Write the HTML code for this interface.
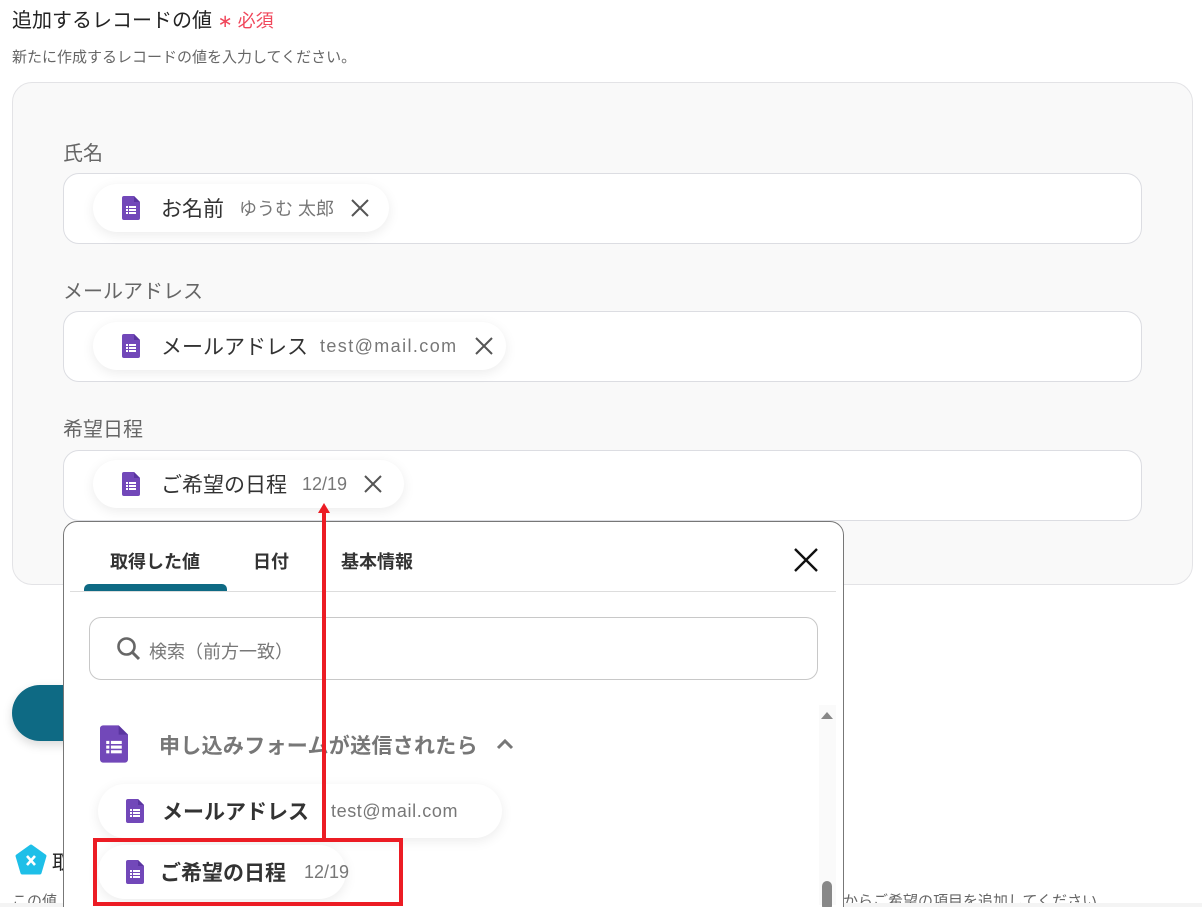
<!DOCTYPE html>
<html style="overflow:hidden;width:1202px;height:907px"><head><meta charset="utf-8">
<style>
*{margin:0;padding:0;box-sizing:border-box}
body{width:1202px;height:907px;overflow:hidden;background:#fff;position:relative;font-family:"Liberation Sans","Noto Sans CJK JP",sans-serif;color:#222}
.a{position:absolute}
svg{flex-shrink:0}
.panel{left:12px;top:82px;width:1181px;height:503px;background:#f9f9f9;border:1px solid #e3e3e6;border-radius:20px}
.lbl{font-size:20px;color:#666}
.inp{left:63px;width:1079px;height:71px;background:#fff;border:1px solid #dcdde2;border-radius:16px}
.pill{height:48px;background:#fff;border-radius:24px;box-shadow:0 3px 12px rgba(0,0,0,.08);display:flex;align-items:center;padding-left:29px;white-space:nowrap}
.pill .n{font-size:21px;color:#333;margin-left:21px}
.pill .v{font-size:18px;color:#777;margin-left:14px}
.pill .x{margin-left:16px}
.em{letter-spacing:1.4px}
</style></head><body>
<div class="a" style="left:12px;top:4px;font-size:20px;color:#222">追加するレコードの値 <span style="color:#f0475b;font-size:18px">∗ 必須</span></div>
<div class="a" style="left:12px;top:46px;font-size:15px;color:#666">新たに作成するレコードの値を入力してください。</div>
<div class="a panel"></div>
<div class="a lbl" style="left:63px;top:137px">氏名</div>
<div class="a inp" style="top:173px"></div>
<div class="a pill" style="left:93px;top:184px;width:296px">
<svg width="18" height="24" viewBox="0 0 18 24"><path d="M2 0h10l6 6v16a2 2 0 0 1-2 2H2a2 2 0 0 1-2-2V2a2 2 0 0 1 2-2z" fill="#7248b9"/><path d="M12 0l6 6h-6z" fill="#5a35a0"/><g fill="#fff"><rect x="4" y="10" width="2" height="2"/><rect x="7" y="10" width="7" height="2"/><rect x="4" y="13" width="2" height="2"/><rect x="7" y="13" width="7" height="2"/><rect x="4" y="16" width="2" height="2"/><rect x="7" y="16" width="7" height="2"/></g></svg>
<span class="n">お名前</span><span class="v" style="margin-left:15px">ゆうむ 太郎</span>
<svg class="x" width="20" height="20" viewBox="0 0 20 20"><path d="M2 2L18 18M18 2L2 18" stroke="#555" stroke-width="2"/></svg></div>

<div class="a lbl" style="left:63px;top:275px">メールアドレス</div>
<div class="a inp" style="top:311px"></div>
<div class="a pill" style="left:93px;top:322px;width:413px">
<svg width="18" height="24" viewBox="0 0 18 24"><path d="M2 0h10l6 6v16a2 2 0 0 1-2 2H2a2 2 0 0 1-2-2V2a2 2 0 0 1 2-2z" fill="#7248b9"/><path d="M12 0l6 6h-6z" fill="#5a35a0"/><g fill="#fff"><rect x="4" y="10" width="2" height="2"/><rect x="7" y="10" width="7" height="2"/><rect x="4" y="13" width="2" height="2"/><rect x="7" y="13" width="7" height="2"/><rect x="4" y="16" width="2" height="2"/><rect x="7" y="16" width="7" height="2"/></g></svg>
<span class="n">メールアドレス</span><span class="v em" style="margin-left:12px">test@mail.com</span>
<svg class="x" width="20" height="20" viewBox="0 0 20 20"><path d="M2 2L18 18M18 2L2 18" stroke="#555" stroke-width="2"/></svg></div>

<div class="a lbl" style="left:63px;top:413px">希望日程</div>
<div class="a inp" style="top:450px"></div>
<div class="a pill" style="left:93px;top:460px;width:311px">
<svg width="18" height="24" viewBox="0 0 18 24"><path d="M2 0h10l6 6v16a2 2 0 0 1-2 2H2a2 2 0 0 1-2-2V2a2 2 0 0 1 2-2z" fill="#7248b9"/><path d="M12 0l6 6h-6z" fill="#5a35a0"/><g fill="#fff"><rect x="4" y="10" width="2" height="2"/><rect x="7" y="10" width="7" height="2"/><rect x="4" y="13" width="2" height="2"/><rect x="7" y="13" width="7" height="2"/><rect x="4" y="16" width="2" height="2"/><rect x="7" y="16" width="7" height="2"/></g></svg>
<span class="n">ご希望の日程</span><span class="v" style="margin-left:15px">12/19</span>
<svg class="x" width="20" height="20" viewBox="0 0 20 20"><path d="M2 2L18 18M18 2L2 18" stroke="#555" stroke-width="2"/></svg></div>

<div class="a" style="left:12px;top:685px;width:120px;height:56px;background:#0e6a84;border-radius:28px;box-shadow:0 4px 10px rgba(0,0,0,.15)"></div>
<svg class="a" style="left:15px;top:844px" width="32" height="32" viewBox="0 0 32 32"><path d="M16 2L30 12L25 29H7L2 12z" fill="#1ebfe8" stroke="#1ebfe8" stroke-width="3" stroke-linejoin="round"/><path d="M12 12l8 9M20 12l-8 9" stroke="#fff" stroke-width="2.6"/></svg>
<div class="a" style="left:52px;top:846px;font-size:20px;color:#222">取</div>
<div class="a" style="left:12px;top:890px;font-size:15px;color:#666">この値</div>
<div class="a" style="left:843px;top:890px;font-size:15px;color:#666">からご希望の項目を追加してください</div>
<div class="a" style="left:0;top:903px;width:1202px;height:4px;background:#f4f4f4"></div>

<div class="a" style="left:63px;top:521px;width:781px;height:400px;background:#fff;border:1px solid #777;border-radius:14px"></div>
<div class="a" style="left:110px;top:548px;font-size:18px;font-weight:bold;color:#333">取得した値</div>
<div class="a" style="left:253px;top:548px;font-size:18px;font-weight:bold;color:#333">日付</div>
<div class="a" style="left:341px;top:548px;font-size:18px;font-weight:bold;color:#333">基本情報</div>
<div class="a" style="left:84px;top:584px;width:143px;height:7px;background:#0e6a84;border-radius:5px 5px 0 0"></div>
<div class="a" style="left:70px;top:591px;width:766px;height:1px;background:#ddd"></div>
<svg class="a" style="left:794px;top:548px" width="24" height="24" viewBox="0 0 24 24"><path d="M1 1L23 23M23 1L1 23" stroke="#111" stroke-width="2.4"/></svg>
<div class="a" style="left:89px;top:617px;width:729px;height:63px;border:1px solid #c8c8c8;border-radius:12px"></div>
<svg class="a" style="left:116px;top:636px" width="26" height="26" viewBox="0 0 26 26"><circle cx="10.5" cy="10.5" r="8" fill="none" stroke="#666" stroke-width="2.6"/><path d="M16.5 16.5L23 23" stroke="#666" stroke-width="3"/></svg>
<div class="a" style="left:149px;top:638px;font-size:18px;color:#777">検索（前方一致）</div>
<div class="a" style="left:819px;top:705px;width:17px;height:200px;background:#fafafa"></div>
<div class="a" style="left:821px;top:712px;width:0;height:0;border-left:6px solid transparent;border-right:6px solid transparent;border-bottom:7px solid #888"></div>
<div class="a" style="left:822px;top:881px;width:10px;height:30px;background:#888;border-radius:5px"></div>

<svg class="a" style="left:100px;top:724px" width="28" height="40" viewBox="0 0 18 24"><path d="M2 0h10l6 6v16a2 2 0 0 1-2 2H2a2 2 0 0 1-2-2V2a2 2 0 0 1 2-2z" fill="#7248b9"/><path d="M12 0l6 6h-6z" fill="#5a35a0"/><g fill="#fff"><rect x="4" y="10" width="2" height="2"/><rect x="7" y="10" width="7" height="2"/><rect x="4" y="13" width="2" height="2"/><rect x="7" y="13" width="7" height="2"/><rect x="4" y="16" width="2" height="2"/><rect x="7" y="16" width="7" height="2"/></g></svg>
<div class="a" style="left:159px;top:730px;font-size:21px;font-weight:bold;color:#777;letter-spacing:0.3px">申し込みフォームが送信されたら</div>
<svg class="a" style="left:495px;top:737px" width="20" height="14" viewBox="0 0 20 14"><path d="M3 11L10 4L17 11" fill="none" stroke="#777" stroke-width="3"/></svg>

<div class="a pill" style="left:98px;top:784px;width:404px;height:54px;border-radius:27px;padding-left:28px">
<svg width="18" height="24" viewBox="0 0 18 24"><path d="M2 0h10l6 6v16a2 2 0 0 1-2 2H2a2 2 0 0 1-2-2V2a2 2 0 0 1 2-2z" fill="#7248b9"/><path d="M12 0l6 6h-6z" fill="#5a35a0"/><g fill="#fff"><rect x="4" y="10" width="2" height="2"/><rect x="7" y="10" width="7" height="2"/><rect x="4" y="13" width="2" height="2"/><rect x="7" y="13" width="7" height="2"/><rect x="4" y="16" width="2" height="2"/><rect x="7" y="16" width="7" height="2"/></g></svg>
<span class="n" style="font-weight:bold;margin-left:18px">メールアドレス</span><span class="v" style="margin-left:22px;letter-spacing:0.6px">test@mail.com</span></div>
<div class="a pill" style="left:98px;top:845px;width:248px;height:54px;border-radius:27px;padding-left:28px">
<svg width="18" height="24" viewBox="0 0 18 24"><path d="M2 0h10l6 6v16a2 2 0 0 1-2 2H2a2 2 0 0 1-2-2V2a2 2 0 0 1 2-2z" fill="#7248b9"/><path d="M12 0l6 6h-6z" fill="#5a35a0"/><g fill="#fff"><rect x="4" y="10" width="2" height="2"/><rect x="7" y="10" width="7" height="2"/><rect x="4" y="13" width="2" height="2"/><rect x="7" y="13" width="7" height="2"/><rect x="4" y="16" width="2" height="2"/><rect x="7" y="16" width="7" height="2"/></g></svg>
<span class="n" style="font-weight:bold;margin-left:16px">ご希望の日程</span><span class="v" style="margin-left:18px">12/19</span></div>

<div class="a" style="left:93px;top:838px;width:310px;height:68px;border:4px solid #ec1c24"></div>
<div class="a" style="left:322px;top:510px;width:4px;height:330px;background:#ec1c24"></div>
<div class="a" style="left:318px;top:503px;width:0;height:0;border-left:6px solid transparent;border-right:6px solid transparent;border-bottom:10px solid #ec1c24"></div>
</body></html>
